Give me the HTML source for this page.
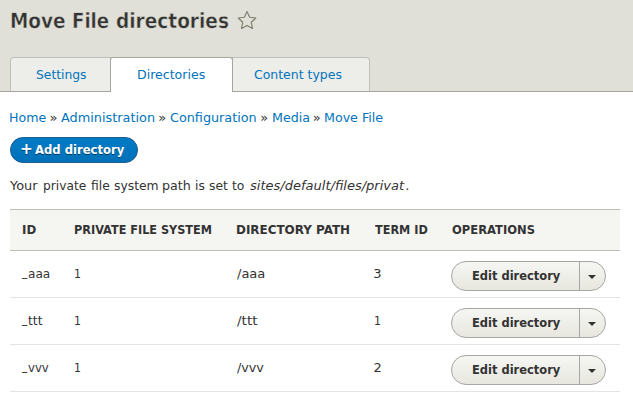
<!DOCTYPE html>
<html lang="en">
<head>
<meta charset="utf-8">
<title>Move File directories</title>
<style>
html,body{margin:0;padding:0;}
body{width:633px;height:403px;box-sizing:border-box;padding:209px 0 0 10px;overflow:hidden;background:#fff;color:#333;position:relative;
  font-family:"DejaVu Sans","Liberation Sans",sans-serif;font-size:13px;line-height:20px;}
a{color:#0074bd;text-decoration:none;}
.w{position:relative;display:inline-block;vertical-align:top;white-space:nowrap;transform-origin:0 50%;line-height:20px;}
/* header */
#branding{position:absolute;left:0;top:0;width:633px;height:91px;background:#e0e0d8;border-bottom:1px solid #a6a5a1;}
h1.page-title{position:absolute;left:10px;top:6px;margin:0;line-height:30px;white-space:nowrap;-webkit-text-stroke:0.45px #e0e0d8;text-rendering:geometricPrecision;font-size:21px;font-weight:bold;color:#333;}
h1.page-title .w{line-height:30px;transform-origin:0 22px;}
.shortcut{position:absolute;left:238px;top:11px;width:18px;height:20px;}
.shortcut svg{display:block;overflow:visible;}
/* tabs */
ul.tabs{position:absolute;left:10px;top:57px;margin:0;padding:0;list-style:none;height:35px;}
ul.tabs li{position:absolute;top:0;height:34px;box-sizing:border-box;padding:7px 0 0 25px;white-space:nowrap;border:1px solid #bfbfba;border-bottom:0;background:#edede9;}
ul.tabs li.t1{left:0;width:101px;border-top-left-radius:4px;}
ul.tabs li.t2{left:100px;width:123px;height:35px;background:#fff;border-color:#a6a5a1;border-radius:3px 3px 0 0;z-index:2;}
ul.tabs li.t3{left:222px;width:138px;border-top-right-radius:4px;}
/* content */
.breadcrumb{position:absolute;left:10px;top:108px;margin:0;white-space:nowrap;}
.action{position:absolute;left:10px;top:137px;width:128px;height:26px;box-sizing:border-box;border:1px solid #1e5c90;border-radius:13px;
  background:#0071b8;background-image:linear-gradient(to bottom,#007bc6,#0071b8);color:#fff;font-weight:bold;text-shadow:0 1px rgba(0,0,0,.5);padding-left:10px;line-height:24px;white-space:nowrap;}
.action .w{line-height:24px;}
p.msg{position:absolute;left:10px;top:176px;margin:0;white-space:nowrap;}
/* table */
table{width:610px;margin:0;border-collapse:collapse;border-spacing:0;table-layout:fixed;}
th{height:40px;padding:0 0 0 12px;white-space:nowrap;border:solid #bfbfba;border-width:1px 0;background:#f5f5f2;text-align:left;font-size:12px;font-weight:bold;text-transform:uppercase;color:#333;}
td{height:46px;padding:0 0 0 12px;white-space:nowrap;border-bottom:1px solid #e6e4df;}
.dropbutton{position:absolute;left:451px;width:155px;height:30px;box-sizing:border-box;border:1px solid #a6a6a6;border-radius:15px;
  background:#f2f1eb;background-image:linear-gradient(to bottom,#f6f6f3,#e7e7df);font-weight:bold;color:#333;padding:4px 0 0 20px;white-space:nowrap;}
.dropbutton a.w{color:#333;}
.dropbutton .tog{position:absolute;left:127px;top:0;width:1px;height:28px;background:#a6a6a6;}
.dropbutton .arr{position:absolute;left:136px;top:13px;width:0;height:0;border-style:solid;border-width:4.5px 4.5px 0 4.5px;border-color:#333 transparent transparent transparent;}
</style>
</head>
<body>
<header id="branding">
  <h1 class="page-title"><span class="w" style="left:0.08px;top:0.00px;transform:scaleX(0.8787);">Move</span> <span class="w" style="left:-8.37px;top:0.00px;transform:scaleX(0.8645);">File</span> <span class="w" style="left:-14.81px;top:0.00px;transform:scaleX(0.8819);">directories</span></h1>
  <a class="shortcut" title="Add to Default shortcuts"><svg width="18" height="20" viewBox="0 0 18 20"><polygon points="9.00,0.60 11.65,6.26 17.84,7.03 13.28,11.29 14.47,17.42 9.00,14.40 3.53,17.42 4.72,11.29 0.16,7.03 6.35,6.26" fill="none" stroke="#807f6c" stroke-width="1.15" stroke-linejoin="round"/></svg></a>
  <ul class="tabs">
    <li class="t1"><a class="w" style="left:-0.07px;top:0.00px;transform:scaleX(0.9474);">Settings</a></li>
    <li class="t2"><a class="w" style="left:0.63px;top:0.00px;transform:scaleX(0.9666);">Directories</a></li>
    <li class="t3"><a class="w" style="left:-3.88px;top:0.00px;transform:scaleX(0.9589);">Content types</a></li>
  </ul>
</header>
<nav class="breadcrumb"><a class="w" style="left:-0.89px;top:0.00px;transform:scaleX(0.9685);">Home</a> <span class="w" style="left:-3.06px;top:0.00px;transform:scaleX(1.0000);">»</span> <a class="w" style="left:-3.24px;top:0.00px;transform:scaleX(0.9888);">Administration</a> <span class="w" style="left:-5.60px;top:0.00px;transform:scaleX(1.0000);">»</span> <a class="w" style="left:-6.49px;top:0.00px;transform:scaleX(0.9829);">Configuration</a> <span class="w" style="left:-8.02px;top:0.00px;transform:scaleX(1.0000);">»</span> <a class="w" style="left:-8.85px;top:0.00px;transform:scaleX(0.9739);">Media</a> <span class="w" style="left:-10.90px;top:0.00px;transform:scaleX(1.0000);">»</span> <a class="w" style="left:-11.49px;top:0.00px;transform:scaleX(0.9718);">Move File</a></nav>
<a class="action"><span class="w" style="left:-0.82px;top:-1.00px;transform:scaleX(0.9512);font-size:16px;">+</span> <span class="w" style="left:-4.14px;top:0.00px;transform:scaleX(0.8928);">Add directory</span></a>
<p class="msg"><span class="w" style="left:0.02px;top:0.00px;transform:scaleX(0.9951);">Your</span> <span class="w" style="left:1.15px;top:0.00px;transform:scaleX(0.9403);">private</span> <span class="w" style="left:-0.60px;top:0.00px;transform:scaleX(0.9432);">file</span> <span class="w" style="left:-2.37px;top:0.00px;transform:scaleX(0.9500);">system</span> <span class="w" style="left:-4.80px;top:0.00px;transform:scaleX(0.9715);">path</span> <span class="w" style="left:-6.21px;top:0.00px;transform:scaleX(0.9500);">is</span> <span class="w" style="left:-6.14px;top:0.00px;transform:scaleX(0.9500);">set</span> <span class="w" style="left:-7.76px;top:0.00px;transform:scaleX(0.9500);">to</span> <em class="w" style="left:-6.46px;top:0.00px;transform:scaleX(1.0016);">sites/default/files/privat</em><span class="w" style="left:-5.26px;top:0.00px;transform:scaleX(1.0000);">.</span></p>
<table>
  <colgroup><col style="width:52px"><col style="width:162px"><col style="width:138px"><col style="width:78px"><col style="width:180px"></colgroup>
  <thead><tr>
    <th><span class="w" style="left:-0.29px;top:0.00px;transform:scaleX(0.9837);">ID</span></th>
    <th><span class="w" style="left:0.09px;top:0.00px;transform:scaleX(0.9395);">PRIVATE FILE SYSTEM</span></th>
    <th><span class="w" style="left:-0.49px;top:0.00px;transform:scaleX(0.9937);">DIRECTORY PATH</span></th>
    <th><span class="w" style="left:0.67px;top:0.00px;transform:scaleX(0.9396);">TERM ID</span></th>
    <th><span class="w" style="left:0.41px;top:0.00px;transform:scaleX(0.9616);">OPERATIONS</span></th>
  </tr></thead>
  <tbody>
    <tr>
      <td><span class="w" style="left:-0.50px;top:-2.00px;transform:scaleX(0.8063);">_</span><span class="w" style="left:-0.85px;top:0.00px;transform:scaleX(0.9333);">aaa</span></td>
      <td><span class="w" style="left:-0.34px;top:0.00px;transform:scaleX(0.8400);">1</span></td>
      <td><span class="w" style="left:0.55px;top:0.00px;transform:scaleX(1.0016);">/aaa</span></td>
      <td><span class="w" style="left:-0.72px;top:0.00px;transform:scaleX(1.0000);">3</span></td>
      <td><div class="dropbutton" style="top:261px"><a class="w" style="left:-0.46px;top:0.00px;transform:scaleX(0.8823);">Edit directory</a><span class="tog"></span><span class="arr"></span></div></td>
    </tr>
    <tr>
      <td><span class="w" style="left:-0.50px;top:-2.00px;transform:scaleX(0.8063);">_</span><span class="w" style="left:-1.00px;top:0.00px;transform:scaleX(0.9500);">ttt</span></td>
      <td><span class="w" style="left:-0.34px;top:0.00px;transform:scaleX(0.8400);">1</span></td>
      <td><span class="w" style="left:0.86px;top:0.00px;transform:scaleX(1.0428);">/ttt</span></td>
      <td><span class="w" style="left:-0.34px;top:0.00px;transform:scaleX(0.8400);">1</span></td>
      <td><div class="dropbutton" style="top:308px"><a class="w" style="left:-0.46px;top:0.00px;transform:scaleX(0.8823);">Edit directory</a><span class="tog"></span><span class="arr"></span></div></td>
    </tr>
    <tr>
      <td><span class="w" style="left:-0.50px;top:-2.00px;transform:scaleX(0.8063);">_</span><span class="w" style="left:-0.95px;top:0.00px;transform:scaleX(0.9015);">vvv</span></td>
      <td><span class="w" style="left:-0.34px;top:0.00px;transform:scaleX(0.8400);">1</span></td>
      <td><span class="w" style="left:0.52px;top:0.00px;transform:scaleX(0.9797);">/vvv</span></td>
      <td><span class="w" style="left:-0.50px;top:0.00px;transform:scaleX(1.0000);">2</span></td>
      <td><div class="dropbutton" style="top:355px"><a class="w" style="left:-0.46px;top:0.00px;transform:scaleX(0.8823);">Edit directory</a><span class="tog"></span><span class="arr"></span></div></td>
    </tr>
  </tbody>
</table>
</body>
</html>
